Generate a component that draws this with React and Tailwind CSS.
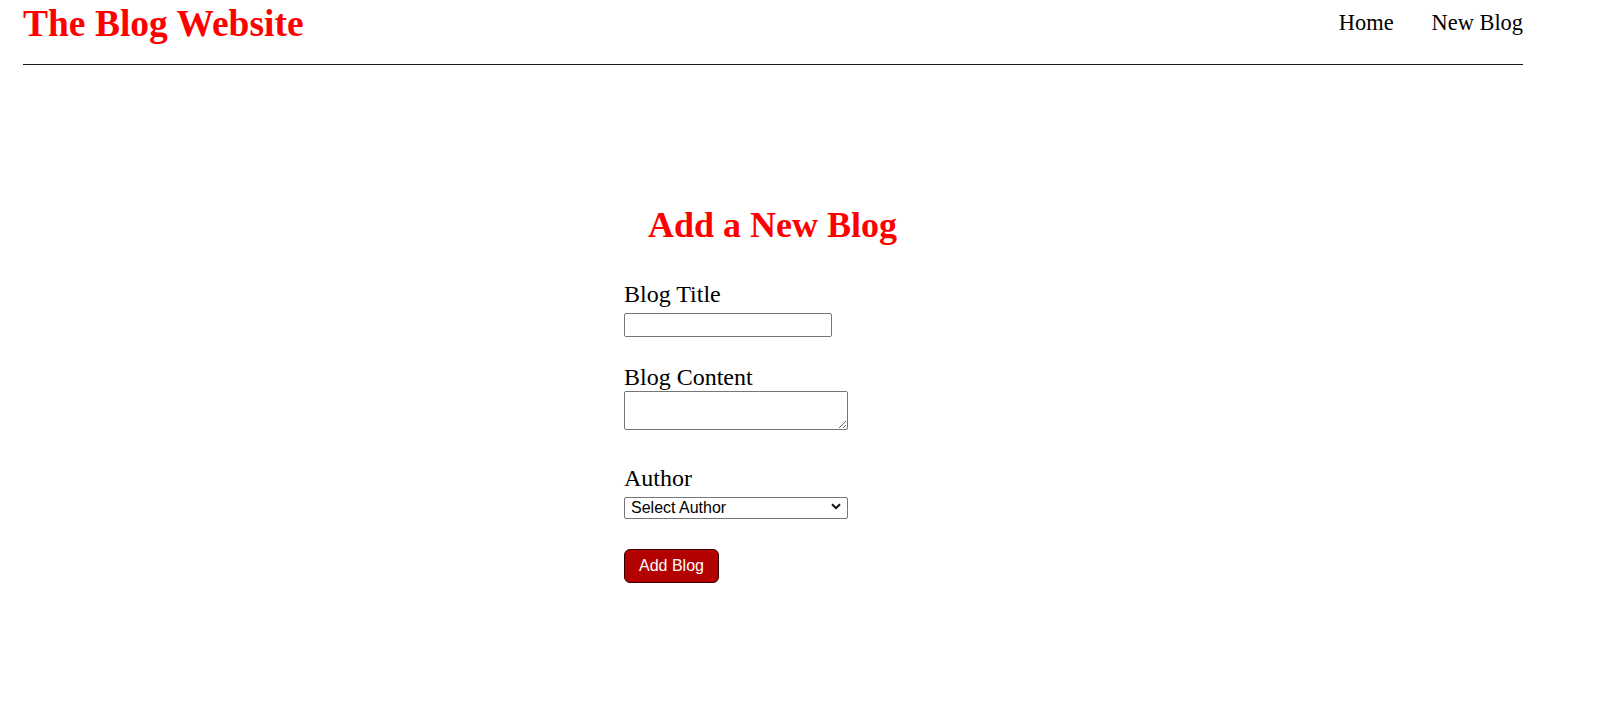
export default function App() {
  return (
    <div className="min-h-[704px] bg-white text-black" style={{ fontFamily: '"Liberation Serif", "Times New Roman", serif' }}>
      <header className="ml-[23px] w-[1500px] h-[65px] border-b border-[#1a1a1a] flex justify-between items-start">
        <h1 className="mt-[2px] text-[37.5px] leading-[1.15] font-bold text-[#ff0000] m-0">The Blog Website</h1>
        <nav className="flex gap-[38px] mt-[10px] text-[22.4px] leading-[1.15]">
          <a className="text-black">Home</a>
          <a className="text-black">New Blog</a>
        </nav>
      </header>
      <main className="ml-[624px] w-[297px] pt-[140px]">
        <h2 className="text-[36px] leading-[1.15] font-bold text-[#ff0000] text-center">Add a New Blog</h2>
        <form className="flex flex-col items-start mt-[35px]" onSubmit={(e) => e.preventDefault()}>
          <label className="text-[24px] leading-[1.15]">Blog Title</label>
          <input type="text" className="mt-[4px] w-[208px] h-[24px] border border-[#767676] rounded-[2px] px-[2px] bg-white" />
          <label className="mt-[27px] text-[24px] leading-[1.15]">Blog Content</label>
          <textarea className="mt-[-1px] w-[224px] h-[39px] border border-[#767676] rounded-[2px] px-[2px] bg-white resize" />
          <label className="mt-[35px] text-[24px] leading-[1.15]">Author</label>
          <div className="relative mt-[4px] w-[224px] h-[22px]">
            <select
              className="appearance-none w-full h-full border border-[#767676] rounded-[2px] pl-[6px] pr-[20px] text-[16px] leading-[20px] bg-white text-black"
              style={{ fontFamily: '"Liberation Sans", Arial, sans-serif' }}
              defaultValue=""
            >
              <option value="">Select Author</option>
            </select>
            <svg className="pointer-events-none absolute right-[7px] top-[7px]" width="10" height="7" viewBox="0 0 10 7" fill="none">
              <path d="M1 1.2 L5 5.2 L9 1.2" stroke="#111" strokeWidth="2" />
            </svg>
          </div>
          <button
            type="submit"
            className="mt-[31px] w-[95px] h-[34px] bg-[#b30000] text-white border border-[#3a0000] rounded-[6px] text-[16px]"
            style={{ fontFamily: '"Liberation Sans", Arial, sans-serif' }}
          >
            Add Blog
          </button>
        </form>
      </main>
    </div>
  );
}
